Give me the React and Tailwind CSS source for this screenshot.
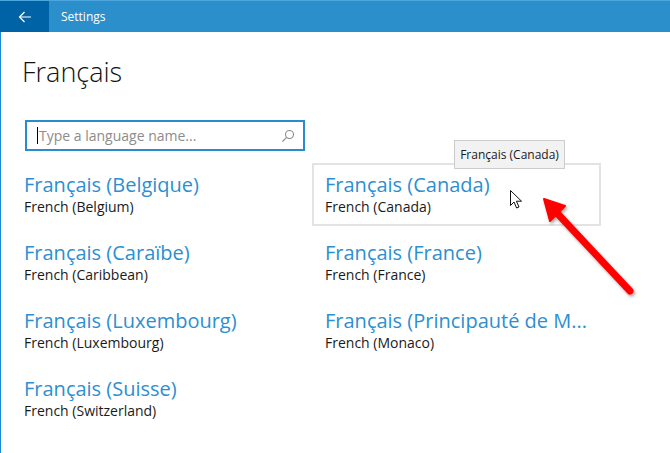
import React from 'react';

const languages = [
  { name: 'Français (Belgique)', en: 'French (Belgium)' },
  { name: 'Français (Canada)', en: 'French (Canada)', hover: true },
  { name: 'Français (Caraïbe)', en: 'French (Caribbean)' },
  { name: 'Français (France)', en: 'French (France)' },
  { name: 'Français (Luxembourg)', en: 'French (Luxembourg)' },
  { name: 'Français (Principauté de M...', en: 'French (Monaco)' },
  { name: 'Français (Suisse)', en: 'French (Switzerland)' },
];

function SearchIcon() {
  return (
    <svg width="14" height="14" viewBox="0 0 14 14" fill="none" stroke="#8a8a8a" strokeWidth="1.1">
      <circle cx="8.5" cy="5.5" r="4" />
      <path d="M5.6 8.4 L1.5 12.5" />
    </svg>
  );
}

function Pointer() {
  return (
    <svg width="13" height="20" viewBox="0 0 13 20" className="absolute left-[510px] top-[190px]">
      <path d="M0.5 0.5 L0.5 15.5 L4 12 L6.6 18 L9 17 L6.4 11.2 L11.5 11.2 Z" fill="#fff" stroke="#111" strokeWidth="1" strokeLinejoin="round" />
    </svg>
  );
}

function RedArrow() {
  return (
    <svg width="670" height="453" className="absolute left-0 top-0 pointer-events-none">
      <defs>
        <filter id="sh" x="-20%" y="-20%" width="140%" height="140%">
          <feDropShadow dx="1.5" dy="2" stdDeviation="1.5" floodColor="#000" floodOpacity="0.35" />
        </filter>
      </defs>
      <g filter="url(#sh)">
        <path d="M630 291 L556 212" stroke="#ff0000" strokeWidth="7" strokeLinecap="round" />
        <path d="M544 199 L565 206 L550 221 Z" fill="#ff0000" stroke="#ff0000" strokeWidth="2" strokeLinejoin="round" />
      </g>
    </svg>
  );
}

export default function App() {
  return (
    <div className="relative w-[670px] h-[453px] overflow-hidden bg-white font-['Open_Sans','Noto_Sans',sans-serif]">
      {/* Title bar */}
      <div className="flex h-[32px] bg-[#2b8fcb] border-t border-[#4ea6de]">
        <div className="w-[49px] flex items-center justify-center bg-[#0063a5]">
          <svg width="14" height="12" viewBox="0 0 14 12" fill="none" stroke="#fff" strokeWidth="1.2">
            <path d="M13 6 H1.5 M6.5 1 L1.5 6 L6.5 11" />
          </svg>
        </div>
        <div className="pl-[12px] flex items-center text-white text-[12px]">Settings</div>
      </div>

      <div className="border-l border-[#1a8ad4] h-[421px]">
        <h1 className="pl-[21px] pt-[22px] text-[27px] leading-[36px] font-light text-[#111]">Français</h1>

        <div className="ml-[24px] mt-[30px] w-[280px] h-[31px] border-2 border-[#2a8ccc] flex items-center pl-[10px] pr-[8px]">
          <div className="w-px h-[17px] bg-black" />
          <span className="text-[14px] text-[#8c8c8c] ml-px flex-1">Type a language name...</span>
          <SearchIcon />
        </div>

        <div className="grid grid-cols-[289px_289px] gap-x-[12px] gap-y-[5px] pl-[10px] mt-[12px]">
          {languages.map((l) => (
            <div
              key={l.name}
              className={
                'h-[63px] pl-[11px] pt-[8px] border-2 ' +
                (l.hover ? 'border-[#e3e3e3]' : 'border-transparent')
              }
            >
              <div className="text-[20px] leading-[24px] text-[#2d8fd0] whitespace-nowrap">{l.name}</div>
              <div className="mt-px text-[14px] leading-[18px] text-[#1a1a1a]">{l.en}</div>
            </div>
          ))}
        </div>
      </div>

      {/* Tooltip */}
      <div className="absolute left-[454px] top-[140px] w-[111px] h-[29px] bg-[#f2f2f2] border border-[#cccccc] flex items-center justify-center text-[12px] text-[#1a1a1a]">
        Français (Canada)
      </div>

      <Pointer />
      <RedArrow />
    </div>
  );
}
